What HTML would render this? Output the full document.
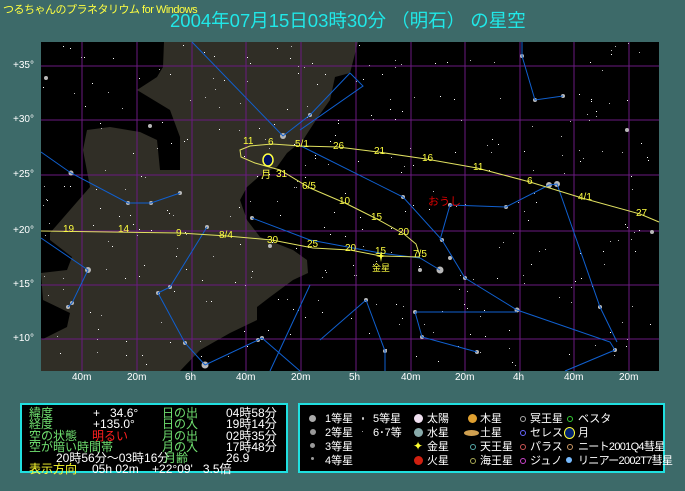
<!DOCTYPE html>
<html><head><meta charset="utf-8">
<style>
html,body{margin:0;padding:0}
body{width:685px;height:491px;background:#3d6a69;position:relative;overflow:hidden;font-family:"Liberation Sans","Noto Sans CJK JP",sans-serif}
.t{position:absolute;white-space:nowrap}
#app{left:3px;top:1px;color:#ffff40;font-size:11px;letter-spacing:-0.5px}
#ttl{left:170px;top:7px;color:#20e8e8;font-size:18.5px;letter-spacing:0px}
.ax{position:absolute;color:#fff;font-size:10px;white-space:nowrap}
.panel{position:absolute;top:403px;height:70px;background:#000;border:2px solid #20e0e0;box-sizing:border-box}
.panel .t{font-size:12px;line-height:11px}
#rp .t{font-size:11px}
.g{color:#70e070}.w{color:#fff}.r{color:#ff2020}.y{color:#ffff30}
.dot{position:absolute;border-radius:50%}
</style></head><body>
<div class="t" id="app">つるちゃんのプラネタリウム for Windows</div>
<div class="t" id="ttl">2004年07月15日03時30分 （明石） の星空</div>

<svg id="sky" style="position:absolute;left:0;top:0" width="685" height="491" xmlns="http://www.w3.org/2000/svg">
<rect x="41" y="42" width="618" height="329" fill="#000"/>
<polygon fill="#302e26" points="164,42 358,42 350,73 335,77 330,100 318,117 303,140 287,153 277,167 263,173 247,187 240,200 247,220 260,237 293,250 307,260 308,273 293,280 270,297 257,307 257,320 230,333 200,350 180,371 41,371 41,340 67,327 70,313 43,300 41,273 67,270 72,257 50,240 50,233 90,187 83,150 87,130 110,127 140,132 157,140 160,170 180,170 180,137 170,110 137,90 157,77 163,67"/>
<g stroke="#6a1a80" stroke-width="1">
<line x1="82" y1="42" x2="82" y2="371"/><line x1="137" y1="42" x2="137" y2="371"/><line x1="192" y1="42" x2="192" y2="371"/><line x1="246" y1="42" x2="246" y2="371"/><line x1="301" y1="42" x2="301" y2="371"/><line x1="356" y1="42" x2="356" y2="371"/><line x1="411" y1="42" x2="411" y2="371"/><line x1="465" y1="42" x2="465" y2="371"/><line x1="520" y1="42" x2="520" y2="371"/><line x1="574" y1="42" x2="574" y2="371"/><line x1="629" y1="42" x2="629" y2="371"/>
<line x1="41" y1="66" x2="659" y2="66"/><line x1="41" y1="120" x2="659" y2="120"/><line x1="41" y1="175" x2="659" y2="175"/><line x1="41" y1="231" x2="659" y2="231"/><line x1="41" y1="285" x2="659" y2="285"/><line x1="41" y1="339" x2="659" y2="339"/>
</g>
<g id="stars"></g>
<g stroke="#1060d0" stroke-width="1" fill="none">
<polyline points="192,42 283,136 310,115 350,73"/>
<polyline points="41,152 71,173 128,203 151,203 180,193"/>
<polyline points="41,238 88,270 72,303 68,307"/>
<polyline points="158,293 170,287 207,227"/>
<polyline points="158,293 185,343 205,365"/>
<polyline points="205,365 258,340 262,338 300,371"/>
<polyline points="252,218 310,240 380,253 420,258 440,270"/>
<polyline points="301,146 403,197 442,240 465,278"/>
<polyline points="350,73 363,86 300,130"/>
<polyline points="465,278 517,310 610,342 615,350"/>
<polyline points="440,240 450,205 506,207 549,185 557,184 600,307 617,342"/>
<polyline points="522,56 535,100 563,96"/>
<polyline points="522,42 522,56"/>
<polyline points="366,300 385,351 385,371"/>
<polyline points="366,300 320,340"/>
<polyline points="415,312 517,312"/>
<polyline points="415,312 422,337 477,352"/>
<polyline points="615,350 565,371"/>
<polyline points="310,285 270,371"/>
</g>
<g stroke="#e0e060" stroke-width="1" fill="none">
<polyline points="41,231 180,233 227,236 272,240 313,248 350,250 381,256 420,257"/>
<polyline points="659,222 640,214 582,198 530,182 477,168 426,159 378,152 338,147 301,146 272,144 250,146 240,150 241,157 255,163 280,170 310,188 345,203 377,219 404,234 416,244 420,256"/>
</g>
<g fill="#ffff40" font-size="10" font-family="Liberation Sans,sans-serif">
<text x="63" y="232">19</text><text x="118" y="232">14</text><text x="176" y="236">9</text><text x="219" y="238">8/4</text><text x="267" y="243">30</text><text x="307" y="247">25</text><text x="345" y="251">20</text><text x="375" y="254">15</text><text x="413" y="257">7/5</text>
<text x="243" y="144">11</text><text x="268" y="145">6</text><text x="295" y="147">5/1</text><text x="333" y="149">26</text><text x="374" y="154">21</text><text x="422" y="161">16</text><text x="473" y="170">11</text><text x="527" y="184">6</text><text x="578" y="200">4/1</text><text x="636" y="216">27</text>
<text x="276" y="177">31</text><text x="302" y="189">6/5</text><text x="339" y="204">10</text><text x="371" y="220">15</text><text x="398" y="235">20</text>
<text x="261" y="178" font-family="Noto Sans CJK JP,sans-serif">月</text>
<text x="372" y="271" font-family="Noto Sans CJK JP,sans-serif" font-size="9">金星</text>
</g>
<text x="428" y="205" fill="#e00000" font-size="11" font-family="Noto Sans CJK JP,sans-serif">おうし</text>
<ellipse cx="268" cy="160" rx="5" ry="6" fill="#001060" stroke="#ffff40" stroke-width="1.5"/>
<path d="M381 251 L382 255 L386 256 L382 257 L381 262 L380 257 L376 256 L380 255 Z" fill="#ffff40"/>
</svg>

<div class="ax" style="left:13px;top:60px">+35°</div>
<div class="ax" style="left:13px;top:114px">+30°</div>
<div class="ax" style="left:13px;top:169px">+25°</div>
<div class="ax" style="left:13px;top:225px">+20°</div>
<div class="ax" style="left:13px;top:279px">+15°</div>
<div class="ax" style="left:13px;top:333px">+10°</div>
<div class="ax" style="left:72px;top:372px">40m</div>
<div class="ax" style="left:127px;top:372px">20m</div>
<div class="ax" style="left:185px;top:372px">6h</div>
<div class="ax" style="left:236px;top:372px">40m</div>
<div class="ax" style="left:291px;top:372px">20m</div>
<div class="ax" style="left:349px;top:372px">5h</div>
<div class="ax" style="left:401px;top:372px">40m</div>
<div class="ax" style="left:455px;top:372px">20m</div>
<div class="ax" style="left:513px;top:372px">4h</div>
<div class="ax" style="left:564px;top:372px">40m</div>
<div class="ax" style="left:619px;top:372px">20m</div>

<div class="panel" style="left:20px;width:268px">
<div class="t g" style="left:7px;top:3px">緯度</div><div class="t w" style="left:71px;top:3px">+&nbsp;&nbsp;&nbsp;34.6°</div><div class="t g" style="left:140px;top:3px">日の出</div><div class="t w" style="left:204px;top:3px">04時58分</div>
<div class="t g" style="left:7px;top:14px">経度</div><div class="t w" style="left:71px;top:14px">+135.0°</div><div class="t g" style="left:140px;top:14px">日の入</div><div class="t w" style="left:204px;top:14px">19時14分</div>
<div class="t g" style="left:7px;top:26px">空の状態</div><div class="t r" style="left:70px;top:26px">明るい</div><div class="t g" style="left:140px;top:26px">月の出</div><div class="t w" style="left:204px;top:26px">02時35分</div>
<div class="t g" style="left:7px;top:37px">空が暗い時間帯</div><div class="t g" style="left:140px;top:37px">月の入</div><div class="t w" style="left:204px;top:37px">17時48分</div>
<div class="t w" style="left:34px;top:48px">20時56分〜03時16分</div><div class="t g" style="left:142px;top:48px">月齢</div><div class="t w" style="left:204px;top:48px">26.9</div>
<div class="t y" style="left:7px;top:59px">表示方向</div><div class="t w" style="left:70px;top:59px">05h 02m&nbsp;&nbsp;&nbsp;&nbsp;+22°09'&nbsp;&nbsp;&nbsp;3.5倍</div>
</div>

<div class="panel" id="rp" style="left:298px;width:367px">
<div class="dot" style="left:9px;top:10px;width:7px;height:7px;background:#aaa"></div><div class="t w" style="left:25px;top:9px">1等星</div>
<div class="dot" style="left:10px;top:24px;width:6px;height:6px;background:#999"></div><div class="t w" style="left:25px;top:23px">2等星</div>
<div class="dot" style="left:10px;top:38px;width:5px;height:5px;background:#999"></div><div class="t w" style="left:25px;top:37px">3等星</div>
<div class="dot" style="left:11px;top:52px;width:3px;height:3px;background:#999"></div><div class="t w" style="left:25px;top:51px">4等星</div>
<div class="dot" style="left:62px;top:12px;width:2px;height:3px;background:#ccc"></div><div class="t w" style="left:73px;top:9px">5等星</div>
<div class="dot" style="left:62px;top:26px;width:1px;height:1px;background:#ccc"></div><div class="t w" style="left:73px;top:23px">6･7等</div>
<div class="dot" style="left:114px;top:9px;width:9px;height:9px;background:#f0e0f0"></div><div class="t w" style="left:127px;top:9px">太陽</div>
<div class="dot" style="left:114px;top:23px;width:9px;height:9px;background:#8aa"></div><div class="t w" style="left:127px;top:23px">水星</div>
<div class="t y" style="left:113px;top:36px;font-size:12px">✦</div><div class="t w" style="left:127px;top:37px">金星</div>
<div class="dot" style="left:114px;top:51px;width:9px;height:9px;background:#d02010"></div><div class="t w" style="left:127px;top:51px">火星</div>
<div class="dot" style="left:168px;top:9px;width:9px;height:9px;background:#e0a030"></div><div class="t w" style="left:180px;top:9px">木星</div>
<div class="dot" style="left:164px;top:25px;width:15px;height:6px;background:#d0a050"></div><div class="t w" style="left:180px;top:23px">土星</div>
<div class="dot" style="left:170px;top:39px;width:4px;height:4px;border:1px solid #5aa"></div><div class="t w" style="left:180px;top:37px">天王星</div>
<div class="dot" style="left:170px;top:53px;width:4px;height:4px;border:1px solid #aa5"></div><div class="t w" style="left:180px;top:51px">海王星</div>
<div class="dot" style="left:220px;top:11px;width:4px;height:4px;border:1px solid #aaa"></div><div class="t w" style="left:230px;top:9px">冥王星</div>
<div class="dot" style="left:220px;top:25px;width:4px;height:4px;border:1px solid #66f"></div><div class="t w" style="left:230px;top:23px">セレス</div>
<div class="dot" style="left:220px;top:39px;width:4px;height:4px;border:1px solid #c55"></div><div class="t w" style="left:230px;top:37px">パラス</div>
<div class="dot" style="left:220px;top:53px;width:4px;height:4px;border:1px solid #c4c"></div><div class="t w" style="left:230px;top:51px">ジュノ</div>
<div class="dot" style="left:267px;top:11px;width:4px;height:4px;border:1px solid #3c3"></div><div class="t w" style="left:278px;top:9px">ベスタ</div>
<div class="dot" style="left:264px;top:22px;width:9px;height:10px;background:#002070;border:1px solid #ff3"></div><div class="t w" style="left:278px;top:23px">月</div>
<div class="dot" style="left:267px;top:39px;width:4px;height:4px;border:1px solid #c96"></div><div class="t w" style="left:278px;top:37px;letter-spacing:-0.7px">ニート2001Q4彗星</div>
<div class="dot" style="left:266px;top:52px;width:6px;height:6px;background:#7bf"></div><div class="t w" style="left:278px;top:51px;letter-spacing:-0.7px">リニアー2002T7彗星</div>
</div>

<script>
var s=12345;function r(){s=(s*16807)%2147483647;return s/2147483647;}
var g=document.getElementById('stars'),h='';
for(var i=0;i<320;i++){var x=41+r()*616,y=42+r()*327,c=r()<0.5?'#fff':'#bbb';h+='<rect x="'+x.toFixed(0)+'" y="'+y.toFixed(0)+'" width="1" height="1" fill="'+c+'"/>';}
var big=[[283,136,3],[71,173,2.5],[128,203,2],[151,203,2],[180,193,2],[88,270,3],[72,303,2],[68,307,2],[158,293,2],[170,287,2],[207,227,2],[185,343,2],[205,365,3.5],[258,340,2],[262,338,2],[252,218,2],[270,246,2],[403,197,2],[442,240,2],[440,270,3.5],[465,278,2],[517,310,2.5],[600,307,2],[615,350,2],[549,185,3],[557,184,3],[506,207,2],[450,205,2],[522,56,2],[535,100,2],[563,96,2],[627,130,2],[652,232,2],[366,300,2],[385,351,2],[415,312,2],[422,337,2],[477,352,2],[46,78,2],[150,126,2],[420,270,2],[450,258,2],[310,115,2]];
big.forEach(function(b){h+='<circle cx="'+b[0]+'" cy="'+b[1]+'" r="'+b[2]+'" fill="#b8b8b8"/>';});
g.innerHTML=h;
</script>
</body></html>
